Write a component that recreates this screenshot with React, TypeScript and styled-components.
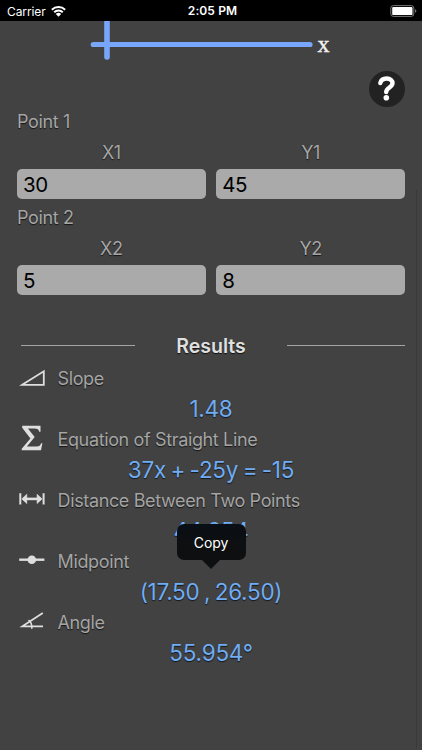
import React from "react";
import styled, { createGlobalStyle } from "styled-components";

const GlobalStyle = createGlobalStyle`
  * { box-sizing: border-box; }
  body { margin: 0; background: #424242; }
  svg { display: block; }
`;

const Screen = styled.main`
  position: relative;
  width: 422px;
  height: 750px;
  overflow: hidden;
  background: #424242;
  color: #a5a5a5;
  font-family: Inter, "Liberation Sans", sans-serif;
  font-size: 18px;
`;

const StatusBar = styled.header`
  display: grid;
  grid-template-columns: 1fr auto 1fr;
  align-items: center;
  height: 21px;
  padding: 0 5px 0 7px;
  background: #000;
  color: #fff;
  font-size: 12px;
`;

const Carrier = styled.div`
  display: flex;
  align-items: center;
  gap: 5px;
  letter-spacing: -0.1px;
  line-height: 21px;
`;

const Clock = styled.div`
  padding-left: 1px;
  font-weight: 600;
  font-size: 12px;
  letter-spacing: 0.1px;
  line-height: 22px;
`;

const BatterySlot = styled.div`
  display: flex;
  justify-content: flex-end;
`;

const ChartArea = styled.section`
  display: flex;
  height: 48px;
  padding-left: 90px;
`;

const AxisName = styled.span`
  margin-left: 4.5px;
  padding-top: 12px;
  color: #f2f2f2;
  font: 24px/22px "Liberation Serif", serif;
  -webkit-text-stroke: 0.4px #f2f2f2;
`;

const HelpRow = styled.div`
  display: flex;
  justify-content: flex-end;
  height: 38px;
  padding: 2px 17px 0 0;
`;

const HelpButton = styled.button`
  width: 36px;
  height: 36px;
  padding: 0;
  border: 0;
  border-radius: 50%;
  background: #222;
`;

const PointGroup = styled.section`
  height: 95.7px;
  padding: 0 17px;
`;

const Label = styled.div`
  font-size: 18px;
  line-height: 30px;
  letter-spacing: -0.36px;
  text-shadow: 0 1px 1px #151515;
  white-space: nowrap;
`;

const Fields = styled.div`
  display: grid;
  grid-template-columns: 1fr 1fr;
  column-gap: 10.5px;
`;

const Field = styled.label`
  display: flex;
  flex-direction: column;
  align-items: center;
`;

const FieldName = styled(Label)`
  padding-top: 1px;
`;

const Input = styled.input`
  width: 100%;
  height: 30.3px;
  margin-top: 1.2px;
  padding: 1px 6px 0;
  border: 0;
  border-radius: 5px;
  outline: 0;
  background: #aaa;
  color: #000;
  font: 20.5px Inter, "Liberation Sans", sans-serif;
  letter-spacing: -0.4px;
`;

const ResultsHeading = styled.div`
  display: grid;
  grid-template-columns: 114px 1fr 118px;
  align-items: center;
  height: 33px;
  margin-top: 31px;
  padding: 0 17px 0 21px;
`;

const Rule = styled.div`
  height: 1px;
  background: #a5a5a5;
`;

const Heading = styled.h2`
  margin: 0;
  padding-top: 2px;
  color: #e0e0e0;
  font-size: 19.5px;
  font-weight: 600;
  line-height: 31px;
  text-align: center;
  text-shadow: 0 1px 1px #111;
`;

const Result = styled.section`
  position: relative;
  height: 61px;
`;

const ResultTitle = styled.div`
  display: grid;
  grid-template-columns: 38.5px 1fr;
  align-items: start;
  height: 31px;
  padding-left: 19px;

  svg { margin-top: 1px; }
`;

const ResultName = styled(Label)`
  padding-top: 2px;
`;

const Value = styled.div`
  height: 30px;
  color: #71acf2;
  font-size: 22.5px;
  line-height: 31px;
  letter-spacing: -0.25px;
  word-spacing: -1.6px;
  text-align: center;
  text-shadow: 0 1px 1px #101820;
  white-space: pre;
`;

const CopyMenu = styled.button`
  position: absolute;
  top: 40px;
  left: 176.5px;
  width: 69px;
  height: 36px;
  padding: 0;
  border: 0;
  border-radius: 7px;
  background: linear-gradient(#090f16, #0e0f10 60%);
  color: #fff;
  font: 14px Inter, sans-serif;
  letter-spacing: -0.1px;
  z-index: 1;

  &::after {
    content: "";
    position: absolute;
    top: 36px;
    left: 25px;
    border: 9.5px solid transparent;
    border-top-color: #0e0f10;
    border-bottom: 0;
  }
`;

const ScrollTrack = styled.div`
  position: absolute;
  top: 190px;
  bottom: 2px;
  right: 5px;
  width: 1px;
  background: #393939;
`;

const Wifi = () => (
  <svg width="15" height="11" viewBox="0 0 15 11" fill="#fff">
    <path d="M.2 3.1a10.4 10.4 0 0 1 14.6 0l-1.3 1.5a8.5 8.5 0 0 0-12 0Z" />
    <path d="M2.5 5.6a7 7 0 0 1 10 0l-1.4 1.5a5 5 0 0 0-7.2 0Z" />
    <path d="M4.8 8.1a3.8 3.8 0 0 1 5.4 0l-2.7 2.7Z" />
  </svg>
);

const Battery = () => (
  <svg width="27" height="12" viewBox="0 0 27 12">
    <rect x=".8" y=".6" width="23" height="10.8" rx="2.5" fill="none" stroke="#777" />
    <rect x="2.2" y="1.9" width="20.3" height="8.2" rx="1.2" fill="#fff" />
    <path d="M25 4.2q1.4.5 1.4 1.8T25 7.8Z" fill="#777" />
  </svg>
);

const Axes = () => (
  <svg width="223" height="48" viewBox="0 0 223 48" stroke="#78a6fb" strokeLinecap="round">
    <path d="M3.3 23.5H220" strokeWidth="5.2" />
    <path d="M17 -5V36" strokeWidth="5.6" />
  </svg>
);

const QuestionMark = () => (
  <svg width="36" height="36" viewBox="0 0 36 36">
    <path
      d="M11.3 12C12 9.1 14.2 7.5 17.7 7.5C21.4 7.5 23.5 9.4 23.5 12.3C23.5 16.4 17.2 16.6 17.2 21"
      fill="none"
      stroke="#fff"
      strokeWidth="4.4"
      strokeLinecap="round"
      strokeLinejoin="round"
    />
    <circle cx="17.3" cy="26.7" r="2.8" fill="#fff" />
  </svg>
);

const SlopeIcon = () => (
  <svg width="28" height="30" viewBox="0 0 28 30">
    <path d="M3.2 21.8 24.8 8.3V21.8Z" fill="none" stroke="#dedede" strokeWidth="1.8" />
  </svg>
);

const SigmaIcon = () => (
  <svg width="28" height="30" viewBox="0 0 28 30">
    <path
      d="M3.2 1.8H21.5V7.8H20.2C19.8 5.3 18.6 4.6 15.4 4.6H8.9L15.7 13.1 7.9 22.6H17.3C20.5 22.6 21.5 21.3 22.1 19.3H23.4L22 26.3H2.7V24.8L11.4 14.4 3.2 3.8Z"
      fill="#dedede"
    />
  </svg>
);

const DistanceIcon = () => (
  <svg width="28" height="30" viewBox="0 0 28 30" fill="none" stroke="#dedede">
    <path d="M1.3 8.2V19.6M24.6 8.2V19.6" strokeWidth="2" />
    <path d="M4 13.9H22" strokeWidth="2.6" />
    <path d="M7.8 9.2 2.8 13.9 7.8 18.6ZM18.1 9.2 23.1 13.9 18.1 18.6Z" fill="#dedede" strokeWidth=".6" />
  </svg>
);

const MidpointIcon = () => (
  <svg width="28" height="30" viewBox="0 0 28 30">
    <path d="M.2 13.7H25.4" stroke="#dedede" strokeWidth="2.4" />
    <circle cx="12.8" cy="13.7" r="4.3" fill="#dedede" />
  </svg>
);

const AngleIcon = () => (
  <svg width="28" height="30" viewBox="0 0 28 30" fill="none" stroke="#dedede" strokeWidth="1.8">
    <path d="M23.8 6.1 3.4 19.3H24" />
    <path d="M9.5 13.2Q13.2 15.7 12.8 21.7" strokeWidth="1.6" />
  </svg>
);

const points = [
  { title: "Point 1", fields: [["X1", "30"], ["Y1", "45"]] },
  { title: "Point 2", fields: [["X2", "5"], ["Y2", "8"]] },
];

const results = [
  { title: "Slope", value: "1.48", Icon: SlopeIcon },
  { title: "Equation of Straight Line", value: "37x + -25y = -15", Icon: SigmaIcon },
  { title: "Distance Between Two Points", value: "44.654", Icon: DistanceIcon, copy: true },
  { title: "Midpoint", value: "(17.50 , 26.50)", Icon: MidpointIcon },
  { title: "Angle", value: "55.954°", Icon: AngleIcon },
];

export default function App() {
  return (
    <Screen>
      <GlobalStyle />
      <StatusBar>
        <Carrier>Carrier <Wifi /></Carrier>
        <Clock>2:05 PM</Clock>
        <BatterySlot><Battery /></BatterySlot>
      </StatusBar>
      <ChartArea>
        <Axes />
        <AxisName>x</AxisName>
      </ChartArea>
      <HelpRow>
        <HelpButton aria-label="Help"><QuestionMark /></HelpButton>
      </HelpRow>
      {points.map((point) => (
        <PointGroup key={point.title}>
          <Label>{point.title}</Label>
          <Fields>
            {point.fields.map(([name, value]) => (
              <Field key={name}>
                <FieldName as="span">{name}</FieldName>
                <Input defaultValue={value} />
              </Field>
            ))}
          </Fields>
        </PointGroup>
      ))}
      <ResultsHeading>
        <Rule />
        <Heading>Results</Heading>
        <Rule />
      </ResultsHeading>
      {results.map(({ title, value, Icon, copy }) => (
        <Result key={title}>
          <ResultTitle>
            <Icon />
            <ResultName>{title}</ResultName>
          </ResultTitle>
          <Value>{value}</Value>
          {copy && <CopyMenu>Copy</CopyMenu>}
        </Result>
      ))}
      <ScrollTrack />
    </Screen>
  );
}
